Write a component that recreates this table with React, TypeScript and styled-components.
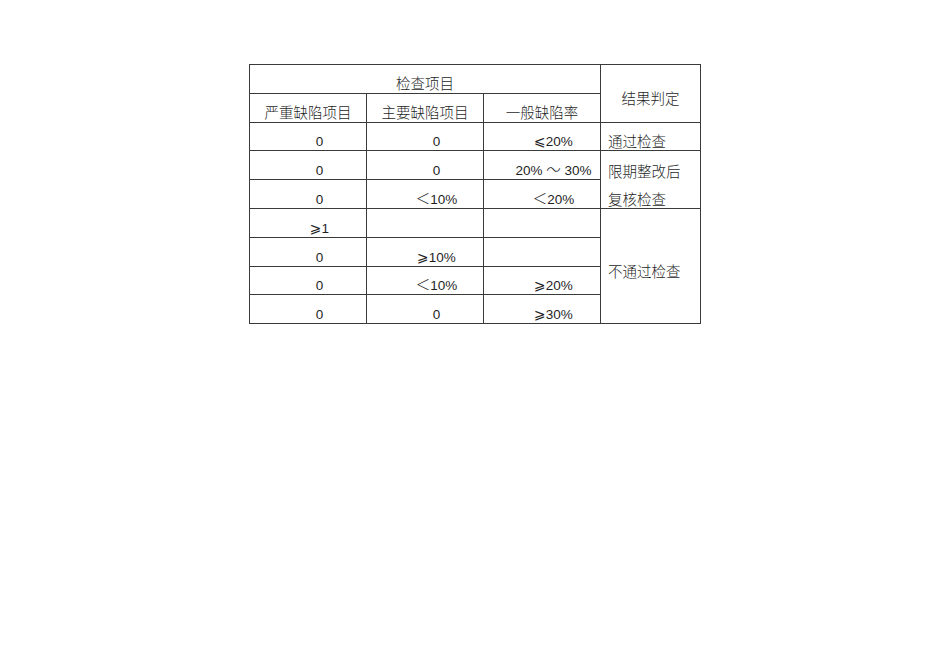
import React from "react";
import styled, { createGlobalStyle } from "styled-components";

const GlobalStyle = createGlobalStyle`
  html, body {
    margin: 0;
    padding: 0;
    background: #ffffff;
  }
  body {
    width: 950px;
    height: 672px;
    font-family: "Liberation Sans", "Noto Sans CJK SC", sans-serif;
    color: #1f1f1f;
  }
`;

const Page = styled.div`
  width: 950px;
  height: 672px;
  padding-top: 64px;
  box-sizing: border-box;
`;

const Table = styled.table`
  margin: 0 auto;
  width: 451px;
  border-collapse: collapse;
  table-layout: fixed;
  font-size: 13.5px;
`;

const Row = styled.tr`
  height: 28.8px;
`;

const HeadCell = styled.th`
  border: 1px solid #3a3a3a;
  padding: 9px 0 0;
  font-weight: 300;
  font-family: "Noto Sans CJK SC", sans-serif;
  font-size: 14.5px;
  line-height: 16px;
  text-align: center;
  vertical-align: middle;
  white-space: nowrap;
`;

const Cell = styled.td<{ $open?: "top" | "bottom" }>`
  border: 1px solid #3a3a3a;
  ${(p) => (p.$open === "bottom" ? "border-bottom-style: hidden;" : "")}
  ${(p) => (p.$open === "top" ? "border-top-style: hidden;" : "")}
  padding: 12px 0 0 23px;
  line-height: 14px;
  text-align: center;
  vertical-align: middle;
  white-space: nowrap;
`;

const ResultCell = styled(Cell)`
  padding-top: 10px;
  padding-left: 7px;
  line-height: 16px;
  text-align: left;
  font-family: "Noto Sans CJK SC", sans-serif;
  font-weight: 300;
  font-size: 14.5px;
`;

const Han = styled.span`
  font-family: "Noto Sans CJK SC", sans-serif;
  font-weight: 300;
  font-size: 14.5px;
  line-height: 0;
`;

const Sym = styled.span`
  font-family: "DejaVu Sans", sans-serif;
  font-size: 14px;
  line-height: 0;
`;

const LE = () => <Sym>⩽</Sym>;
const GE = () => <Sym>⩾</Sym>;
const LT = () => <Han>＜</Han>;

export default function App() {
  return (
    <>
      <GlobalStyle />
      <Page>
        <Table>
          <colgroup>
            <col style={{ width: 117 }} />
            <col style={{ width: 117 }} />
            <col style={{ width: 117 }} />
            <col style={{ width: 100 }} />
          </colgroup>
          <tbody>
            <Row>
              <HeadCell colSpan={3}>检查项目</HeadCell>
              <HeadCell rowSpan={2}>结果判定</HeadCell>
            </Row>
            <Row>
              <HeadCell>严重缺陷项目</HeadCell>
              <HeadCell>主要缺陷项目</HeadCell>
              <HeadCell>一般缺陷率</HeadCell>
            </Row>
            <Row>
              <Cell>0</Cell>
              <Cell>0</Cell>
              <Cell>
                <LE />20%
              </Cell>
              <ResultCell>通过检查</ResultCell>
            </Row>
            <Row>
              <Cell>0</Cell>
              <Cell>0</Cell>
              <Cell>
                20% <Han>～</Han> 30%
              </Cell>
              <ResultCell $open="bottom">限期整改后</ResultCell>
            </Row>
            <Row>
              <Cell>0</Cell>
              <Cell>
                <LT />10%
              </Cell>
              <Cell>
                <LT />20%
              </Cell>
              <ResultCell $open="top">复核检查</ResultCell>
            </Row>
            <Row>
              <Cell>
                <GE />1
              </Cell>
              <Cell />
              <Cell />
              <ResultCell rowSpan={4}>不通过检查</ResultCell>
            </Row>
            <Row>
              <Cell>0</Cell>
              <Cell>
                <GE />10%
              </Cell>
              <Cell />
            </Row>
            <Row>
              <Cell>0</Cell>
              <Cell>
                <LT />10%
              </Cell>
              <Cell>
                <GE />20%
              </Cell>
            </Row>
            <Row>
              <Cell>0</Cell>
              <Cell>0</Cell>
              <Cell>
                <GE />30%
              </Cell>
            </Row>
          </tbody>
        </Table>
      </Page>
    </>
  );
}
